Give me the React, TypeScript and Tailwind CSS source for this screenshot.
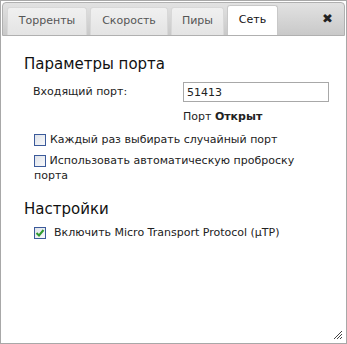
import React, { useState } from "react";

const tabs = [
  { name: "Торренты", w: "w-[80px]" },
  { name: "Скорость", w: "w-[78px]" },
  { name: "Пиры", w: "w-[53px]" },
  { name: "Сеть", w: "w-[51px]" },
];

const Box: React.FC<{ checked?: boolean }> = ({ checked }) => (
  <span className="inline-flex h-[12px] w-[12px] shrink-0 items-center justify-center border border-[#3b5a9a] bg-gradient-to-br from-[#dfe3ea] to-[#f7f8fa] align-middle">
    {checked && (
      <svg width="10" height="10" viewBox="0 0 10 10">
        <path d="M1.5 5 L4 7.5 L8.5 2" fill="none" stroke="#2e9a2e" strokeWidth="2" />
      </svg>
    )}
  </span>
);

const App: React.FC = () => {
  const [activeTab, setActiveTab] = useState("Сеть");

  return (
    <div
      className="relative h-[344px] w-[347px] overflow-hidden border border-[#a8a8a8] bg-white text-[#222]"
      style={{ fontFamily: '"DejaVu Sans", Verdana, sans-serif' }}
    >
      {/* Tab bar */}
      <div className="mx-[1px] mt-[1px] flex h-[34px] items-end gap-[3px] rounded-t-[4px] border border-[#b0b0b0] bg-gradient-to-b from-[#e2e2e2] to-[#c9c9c9] pl-[4px] pr-[3px]">
        {tabs.map((tab) => (
          <button
            key={tab.name}
            onClick={() => setActiveTab(tab.name)}
            className={`flex items-center justify-center rounded-t-[3px] border border-b-0 text-[11px] ${tab.w} ${
              activeTab === tab.name
                ? "h-[30px] border-[#c8c8c8] bg-white text-[#111]"
                : "h-[28px] border-[#d8d8d8] bg-gradient-to-b from-[#f0f0f0] to-[#e4e4e4] text-[#555]"
            }`}
          >
            {tab.name}
          </button>
        ))}
        <span className="mb-[10px] ml-auto mr-[8px] text-[13px] font-bold leading-none text-[#222]">✖</span>
      </div>

      {/* Content */}
      <div className="pl-[23px] pr-[10px] pt-[19px]">
        <h2 className="text-[15px] leading-[18px] text-[#111]">Параметры порта</h2>

        <div className="ml-[9px] mt-[9px] flex items-center text-[11px]">
          <span className="w-[150px] shrink-0">Входящий порт:</span>
          <input
            defaultValue="51413"
            className="h-[20px] w-[146px] shrink-0 border border-[#a8a8a8] px-[3px] text-[11px] outline-none"
            style={{ fontFamily: '"DejaVu Sans", Verdana, sans-serif' }}
          />
        </div>

        <div className="ml-[159px] mt-[7px] text-[11px]">
          Порт <b>Открыт</b>
        </div>

        <label className="ml-[10px] mt-[6px] flex items-center gap-[4px] text-[11px]">
          <Box />
          <span>Каждый раз выбирать случайный порт</span>
        </label>

        <label className="ml-[10px] mr-[13px] mt-[5px] block text-[11px] leading-[15px]">
          <Box /> Использовать автоматическую проброску порта
        </label>

        <h2 className="mt-[17px] text-[15px] leading-[18px] text-[#111]">Настройки</h2>

        <label className="ml-[10px] mt-[7px] flex items-center gap-[8px] text-[11px]">
          <Box checked />
          <span>Включить Micro Transport Protocol (µTP)</span>
        </label>
      </div>

      {/* Resize grip */}
      <svg className="absolute bottom-[3px] right-[3px]" width="12" height="12" viewBox="0 0 12 12">
        <path d="M11 3 L3 11 M11 6 L6 11 M11 9 L9 11" stroke="#444" strokeWidth="1" />
      </svg>
    </div>
  );
};

export default App;
